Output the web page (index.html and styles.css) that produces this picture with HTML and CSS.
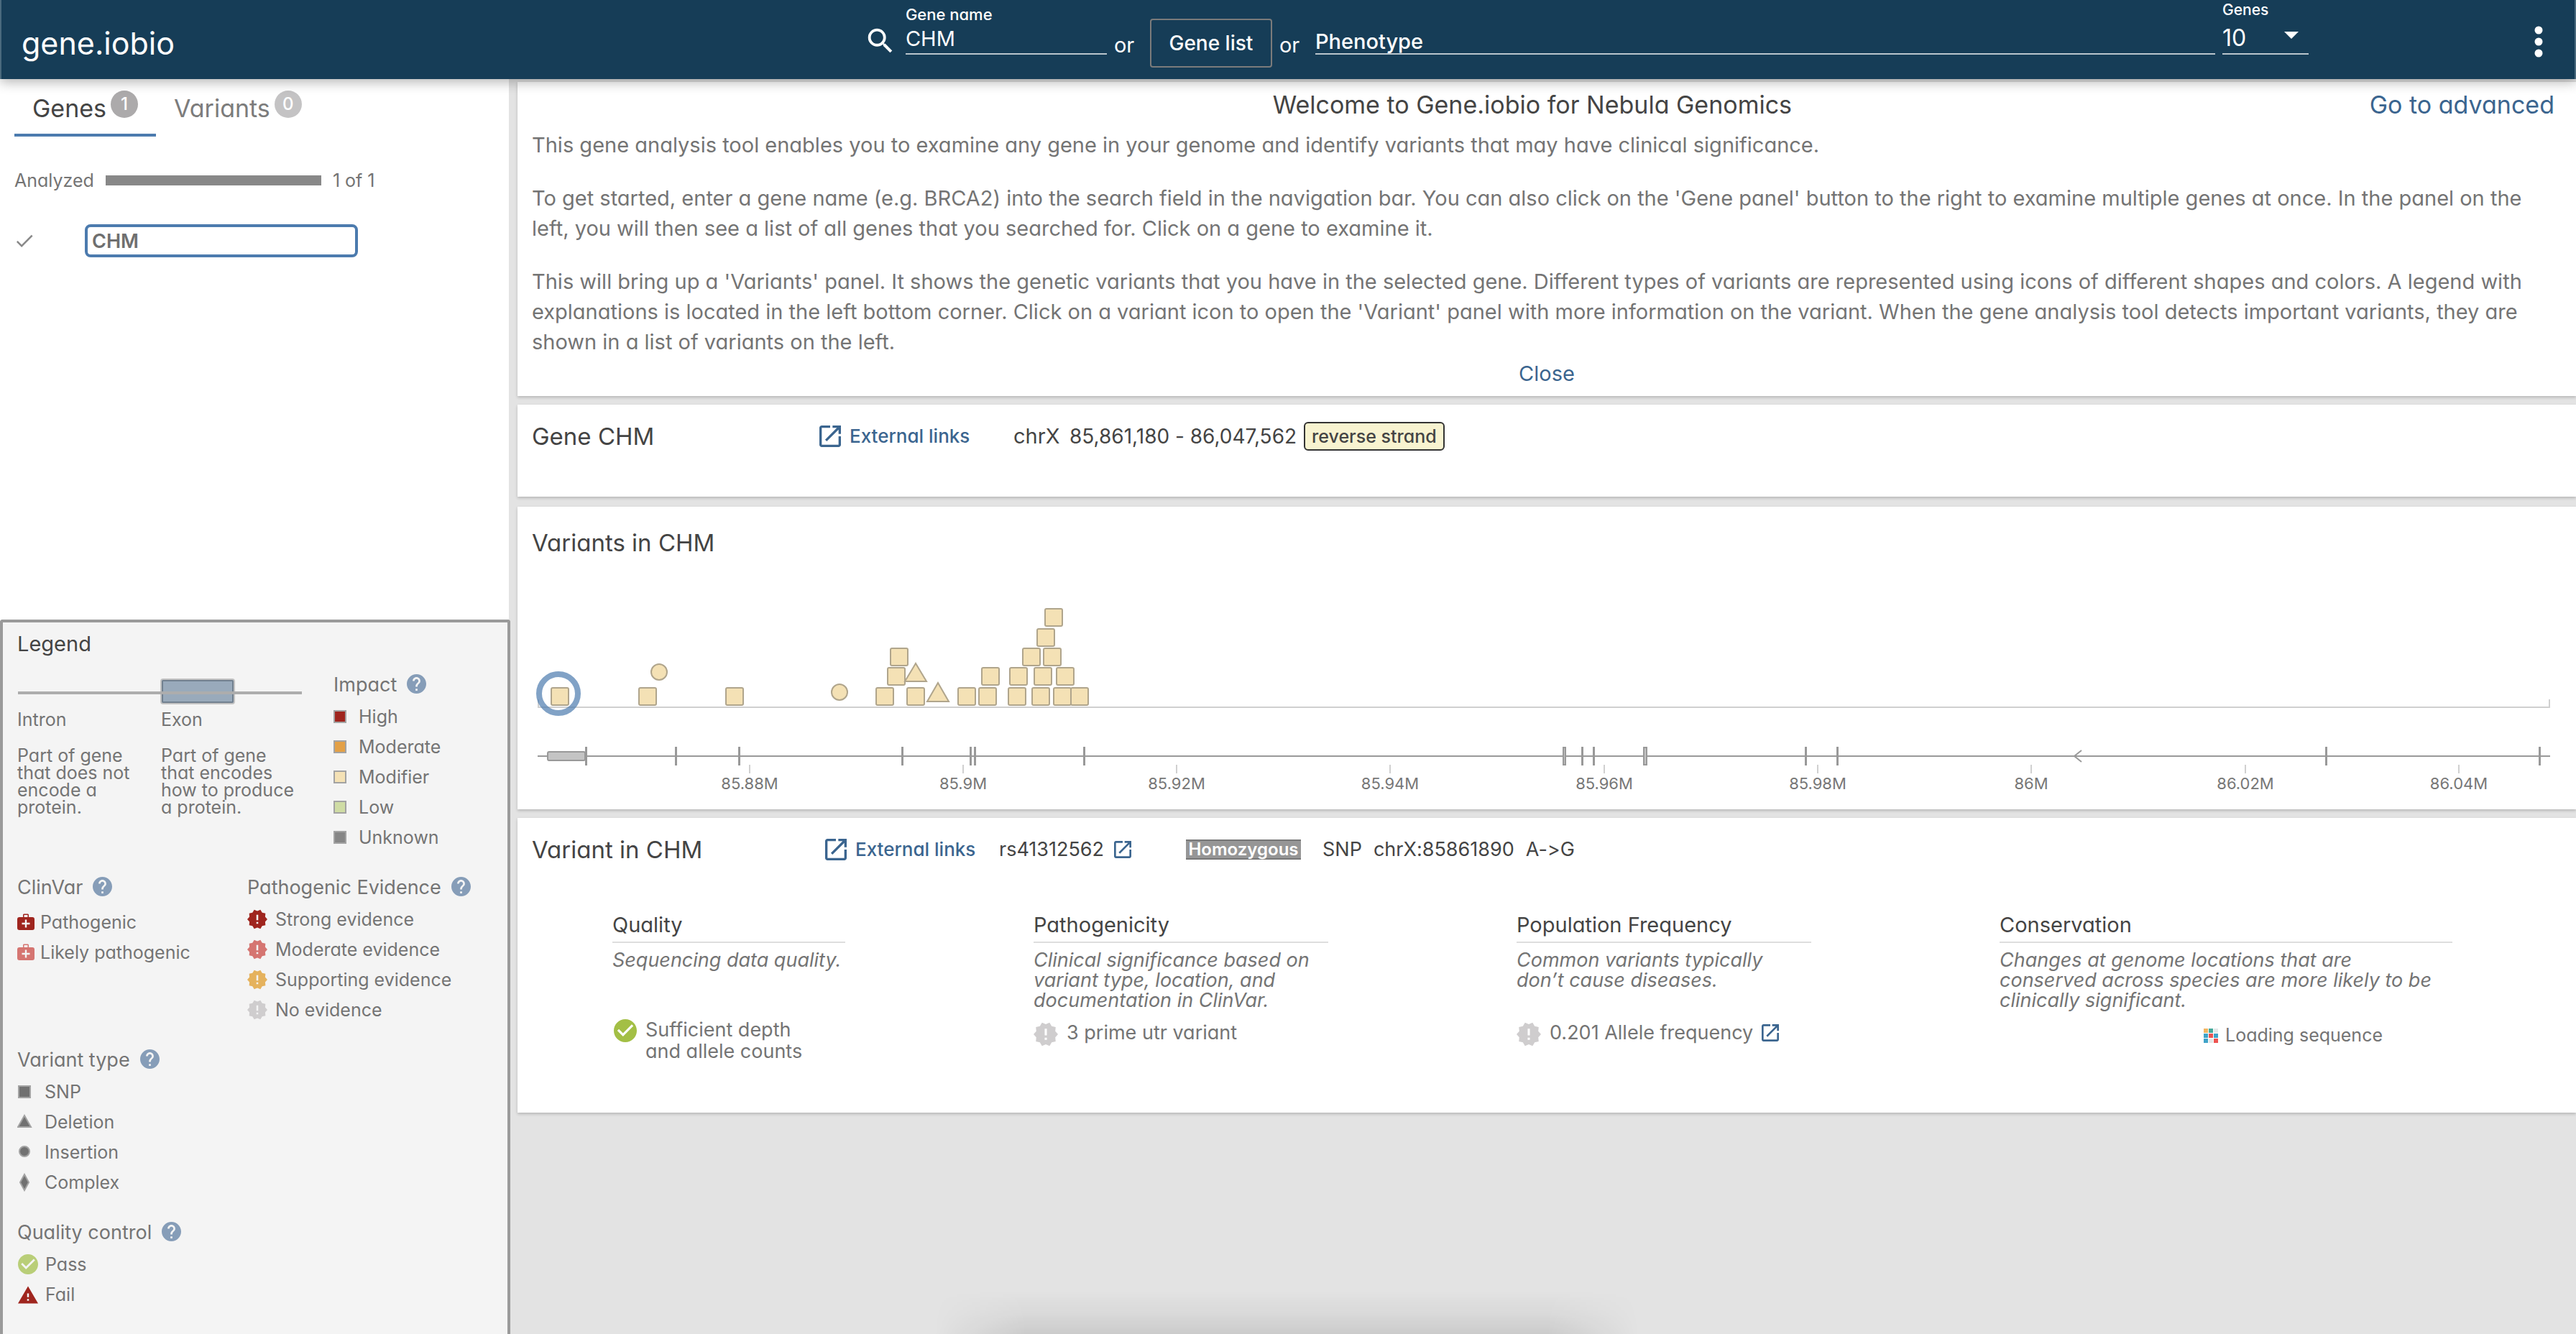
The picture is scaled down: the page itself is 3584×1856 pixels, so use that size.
FILE: index.html
```html
<!DOCTYPE html>
<html lang="en">
<head>
<meta charset="utf-8">
<title>gene.iobio</title>
<link rel="stylesheet" href="styles.css">
</head>
<body>
<svg class="sprite" aria-hidden="true">
  <symbol id="i-search" viewBox="0 0 24 24"><path d="M9.5,3A6.5,6.5 0 0,1 16,9.500C16,11.110 15.410,12.590 14.440,13.730L14.710,14H15.500L20.500,19L19,20.500L14,15.500V14.710L13.730,14.440C12.590,15.410 11.110,16 9.500,16A6.500,6.500 0 0,1 3,9.500A6.500,6.500 0 0,1 9.500,3M9.500,5C7,5 5,7 5,9.500C5,12 7,14 9.500,14C12,14 14,12 14,9.500C14,7 12,5 9.500,5Z"/></symbol>
  <symbol id="i-help" viewBox="2 2 20 20"><path d="M12 2C6.480 2 2 6.480 2 12s4.480 10 10 10 10-4.480 10-10S17.520 2 12 2zm1 17h-2v-2h2v2zm2.070-7.750l-.9.920C13.450 12.900 13 13.500 13 15h-2v-.5c0-1.100.450-2.100 1.170-2.830l1.240-1.260c.370-.360.590-.860.590-1.410 0-1.100-.9-2-2-2s-2 .9-2 2H8c0-2.210 1.790-4 4-4s4 1.790 4 4c0 .880-.360 1.680-.930 2.250z"/></symbol>
  <symbol id="i-check" viewBox="2 2 20 20"><path d="M12 2C6.480 2 2 6.480 2 12s4.480 10 10 10 10-4.480 10-10S17.520 2 12 2zm-2 15l-5-5 1.410-1.410L10 14.170l7.590-7.590L19 8l-9 9z"/></symbol>
  <symbol id="i-tick" viewBox="3 5 18 14"><path d="M9 16.200L4.800 12l-1.400 1.400L9 19 21 7l-1.400-1.400L9 16.200z"/></symbol>
  <symbol id="i-badge" viewBox="1 1 22 22"><path d="M23,12L20.560,9.220L20.900,5.540L17.290,4.720L15.400,1.540L12,3L8.600,1.540L6.710,4.720L3.100,5.530L3.440,9.210L1,12L3.440,14.780L3.100,18.470L6.710,19.290L8.600,22.470L12,21L15.400,22.460L17.290,19.280L20.900,18.460L20.560,14.780L23,12M13,17H11V15H13V17M13,13H11V7H13V13Z"/></symbol>
  <symbol id="i-bag" viewBox="0 0 24 24"><path fill-rule="evenodd" d="M8 5V1.500L9 .5h6l1 1V5h5a3 3 0 0 1 3 3v12a3 3 0 0 1-3 3H3a3 3 0 0 1-3-3V8a3 3 0 0 1 3-3zM9.500 2v3h5V2zM10.800 8.500v4.300H6.500v2.400h4.300v4.300h2.400v-4.300h4.300v-2.400h-4.300V8.500z"/></symbol>
  <symbol id="i-open" viewBox="3 3 18 18"><path d="M19 19H5V5h7V3H5c-1.110 0-2 .9-2 2v14c0 1.100.890 2 2 2h14c1.100 0 2-.9 2-2v-7h-2v7zM14 3v2h3.590l-9.830 9.830 1.410 1.410L19 6.410V10h2V3h-7z"/></symbol>
  <symbol id="i-alert" viewBox="1 2 22 19"><path d="M1 21h22L12 2 1 21zm12-3h-2v-2h2v2zm0-4h-2v-4h2v4z"/></symbol>
</svg>

<header class="topbar">
  <h1 class="brand">gene.iobio</h1>
  <svg class="search-icon"><use href="#i-search"/></svg>
  <div class="field field-gene">
    <label for="gene">Gene name</label>
    <input id="gene" type="text" value="CHM">
  </div>
  <span class="or">or</span>
  <button class="gene-list" type="button">Gene list</button>
  <span class="or">or</span>
  <div class="field field-pheno">
    <input type="text" placeholder="Phenotype" aria-label="Phenotype">
  </div>
  <div class="field field-count">
    <label for="count">Genes</label>
    <select id="count"><option>10</option></select>
    <svg class="caret" viewBox="0 0 20 10"><path d="M0 0h20L10 10z"/></svg>
  </div>
  <button class="menu" type="button" aria-label="Menu">
    <svg viewBox="0 0 12 44"><circle cx="6" cy="6" r="5.500"/><circle cx="6" cy="22" r="5.500"/><circle cx="6" cy="38" r="5.500"/></svg>
  </button>
</header>

<div class="layout">
  <aside class="sidebar">
    <nav class="tabs">
      <button class="tab active" type="button">Genes<span class="count">1</span></button>
      <button class="tab" type="button">Variants<span class="count">0</span></button>
    </nav>
    <div class="progress">
      <span>Analyzed</span><span class="bar"></span><span>1 of 1</span>
    </div>
    <div class="gene-row">
      <svg class="tick"><use href="#i-tick"/></svg>
      <button class="gene-chip" type="button">CHM</button>
    </div>

    <section class="legend">
      <h2>Legend</h2>
      <div class="legend-top">
        <div class="structure">
          <svg class="gene-glyph" viewBox="0 0 396 36">
            <rect x="200" y="1" width="102" height="34" rx="3" fill="#99aabb" stroke="#c2c2c2" stroke-width="2"/>
            <rect x="202" y="3" width="98" height="30" rx="1" fill="#99aabb" stroke="#71808f" stroke-width="2"/>
            <path d="M1 20H396" stroke="#adadad" stroke-width="4"/>
          </svg>
          <dl class="terms">
            <div><dt>Intron</dt><dd>Part of gene<br>that does not<br>encode a<br>protein.</dd></div>
            <div><dt>Exon</dt><dd>Part of gene<br>that encodes<br>how to produce<br>a protein.</dd></div>
          </dl>
        </div>
        <div class="impact">
          <h3>Impact <svg class="help"><use href="#i-help"/></svg></h3>
          <ul>
            <li><i class="swatch high"></i>High</li>
            <li><i class="swatch moderate"></i>Moderate</li>
            <li><i class="swatch modifier"></i>Modifier</li>
            <li><i class="swatch low"></i>Low</li>
            <li><i class="swatch unknown"></i>Unknown</li>
          </ul>
        </div>
      </div>
      <div class="legend-mid">
        <div class="clinvar">
          <h3>ClinVar <svg class="help"><use href="#i-help"/></svg></h3>
          <ul>
            <li><svg class="bag red"><use href="#i-bag"/></svg>Pathogenic</li>
            <li><svg class="bag pink"><use href="#i-bag"/></svg>Likely pathogenic</li>
          </ul>
        </div>
        <div class="evidence">
          <h3>Pathogenic Evidence <svg class="help"><use href="#i-help"/></svg></h3>
          <ul>
            <li><svg class="decagram red"><use href="#i-badge"/></svg>Strong evidence</li>
            <li><svg class="decagram pink"><use href="#i-badge"/></svg>Moderate evidence</li>
            <li><svg class="decagram amber"><use href="#i-badge"/></svg>Supporting evidence</li>
            <li><svg class="decagram pale"><use href="#i-badge"/></svg>No evidence</li>
          </ul>
        </div>
      </div>
      <div class="types">
        <h3>Variant type <svg class="help"><use href="#i-help"/></svg></h3>
        <ul>
          <li><svg class="shape" viewBox="0 0 22 26"><rect x="2" y="5" width="16" height="16"/></svg>SNP</li>
          <li><svg class="shape" viewBox="0 0 22 26"><path d="M10 4L19 20H1z"/></svg>Deletion</li>
          <li><svg class="shape" viewBox="0 0 22 26"><circle cx="10" cy="12" r="7"/></svg>Insertion</li>
          <li><svg class="shape" viewBox="0 0 22 26"><path d="M10 2l6 11-6 11-6-11z"/></svg>Complex</li>
        </ul>
      </div>
      <div class="quality">
        <h3>Quality control <svg class="help"><use href="#i-help"/></svg></h3>
        <ul>
          <li><svg class="pass"><use href="#i-check"/></svg>Pass</li>
          <li><svg class="fail"><use href="#i-alert"/></svg>Fail</li>
        </ul>
      </div>
    </section>
  </aside>

  <main class="content">
    <section class="card welcome">
      <div class="welcome-head">
        <h2>Welcome to Gene.iobio for Nebula Genomics</h2>
        <a href="#advanced">Go to advanced</a>
      </div>
      <p>This gene analysis tool enables you to examine any gene in your genome and identify variants that may have clinical significance.</p>
      <p>To get started, enter a gene name (e.g. BRCA2) into the search field in the navigation bar. You can also click on the 'Gene panel' button to the right to examine multiple genes at once. In the panel on the left, you will then see a list of all genes that you searched for. Click on a gene to examine it.</p>
      <p>This will bring up a 'Variants' panel. It shows the genetic variants that you have in the selected gene. Different types of variants are represented using icons of different shapes and colors. A legend with explanations is located in the left bottom corner. Click on a variant icon to open the 'Variant' panel with more information on the variant. When the gene analysis tool detects important variants, they are shown in a list of variants on the left.</p>
      <button class="close" type="button">Close</button>
    </section>

    <section class="card gene-card">
      <h2>Gene CHM</h2>
      <a class="ext" href="#links"><svg class="open"><use href="#i-open"/></svg>External links</a>
      <span class="chrom">chrX</span>
      <span class="range">85,861,180 - 86,047,562</span>
      <span class="strand">reverse strand</span>
    </section>

    <section class="card variants-card">
      <h2>Variants in CHM</h2>
      <svg class="chart" viewBox="720 776 2864 344" role="img" aria-label="Variants in CHM">
        <path class="axis" d="M749 973V984H3547V973"/>
        <g class="variants">
          <rect x="767" y="957" width="24" height="24" rx="2"/>
          <rect x="889" y="957" width="24" height="24" rx="2"/>
          <rect x="1010" y="957" width="24" height="24" rx="2"/>
          <rect x="1219" y="957" width="24" height="24" rx="2"/>
          <rect x="1262" y="957" width="24" height="24" rx="2"/>
          <rect x="1333" y="957" width="24" height="24" rx="2"/>
          <rect x="1362" y="957" width="24" height="24" rx="2"/>
          <rect x="1403" y="957" width="24" height="24" rx="2"/>
          <rect x="1436" y="957" width="24" height="24" rx="2"/>
          <rect x="1466" y="957" width="24" height="24" rx="2"/>
          <rect x="1490" y="957" width="24" height="24" rx="2"/>
          <rect x="1235" y="929" width="24" height="24" rx="2"/>
          <rect x="1366" y="929" width="24" height="24" rx="2"/>
          <rect x="1405" y="929" width="24" height="24" rx="2"/>
          <rect x="1439" y="929" width="24" height="24" rx="2"/>
          <rect x="1470" y="929" width="24" height="24" rx="2"/>
          <rect x="1239" y="902" width="24" height="24" rx="2"/>
          <rect x="1423" y="902" width="24" height="24" rx="2"/>
          <rect x="1452" y="902" width="24" height="24" rx="2"/>
          <rect x="1443" y="875" width="24" height="24" rx="2"/>
          <rect x="1454" y="847" width="24" height="24" rx="2"/>
          <circle cx="917" cy="935" r="11"/>
          <circle cx="1168" cy="963" r="11"/>
          <path d="M1274 923L1289 948H1259z"/>
          <path d="M1305 950L1320 976H1290z"/>
        </g>
        <circle class="ring" cx="777" cy="965" r="27"/>
        <g class="exons">
          <path class="strand-line" d="M748 1052H3548M2896 1044L2886 1052L2896 1060"/>
          <rect x="762" y="1046" width="52" height="12" rx="2"/>
          <rect x="815" y="1040" width="1" height="24"/>
          <rect x="940" y="1040" width="1" height="24"/>
          <rect x="1028" y="1040" width="1" height="24"/>
          <rect x="1255" y="1040" width="1" height="24"/>
          <rect x="1350" y="1040" width="1" height="24"/>
          <rect x="1356" y="1040" width="1" height="24"/>
          <rect x="1508" y="1040" width="1" height="24"/>
          <rect x="2175" y="1040" width="3" height="24"/>
          <rect x="2201" y="1040" width="1" height="24"/>
          <rect x="2217" y="1040" width="1" height="24"/>
          <rect x="2287" y="1040" width="4" height="24"/>
          <rect x="2512" y="1040" width="1" height="24"/>
          <rect x="2556" y="1040" width="1" height="24"/>
          <rect x="3236" y="1040" width="1" height="24"/>
          <rect x="3533" y="1040" width="1" height="24"/>
        </g>
        <path class="axis" d="M1043 1064v12M1340 1064v12M1637 1064v12M1934 1064v12M2232 1064v12M2529 1064v12M2826 1064v12M3124 1064v12M3421 1064v12"/>
        <g class="ticks">
          <text x="1043" y="1098">85.88M</text>
          <text x="1340" y="1098">85.9M</text>
          <text x="1637" y="1098">85.92M</text>
          <text x="1934" y="1098">85.94M</text>
          <text x="2232" y="1098">85.96M</text>
          <text x="2529" y="1098">85.98M</text>
          <text x="2826" y="1098">86M</text>
          <text x="3124" y="1098">86.02M</text>
          <text x="3421" y="1098">86.04M</text>
        </g>
      </svg>
    </section>

    <section class="card variant-card">
      <div class="variant-head">
        <h2>Variant in CHM</h2>
        <a class="ext" href="#links"><svg class="open"><use href="#i-open"/></svg>External links</a>
        <a class="rsid" href="#rs41312562">rs41312562<svg class="open-small"><use href="#i-open"/></svg></a>
        <strong class="zygosity">Homozygous</strong>
        <span class="facts"><span>SNP</span><span>chrX:85861890</span><span>A-&gt;G</span></span>
      </div>
      <div class="facets">
        <article>
          <h3>Quality</h3>
          <p>Sequencing data quality.</p>
          <div class="finding"><svg class="ok"><use href="#i-check"/></svg><span>Sufficient depth<br>and allele counts</span></div>
        </article>
        <article>
          <h3>Pathogenicity</h3>
          <p>Clinical significance based on<br>variant type, location, and<br>documentation in ClinVar.</p>
          <div class="finding"><svg class="mark"><use href="#i-badge"/></svg><span>3 prime utr variant</span></div>
        </article>
        <article>
          <h3>Population Frequency</h3>
          <p>Common variants typically<br>don’t cause diseases.</p>
          <div class="finding"><svg class="mark"><use href="#i-badge"/></svg><span>0.201 Allele frequency</span><a href="#frequency" aria-label="Open allele frequency"><svg class="open-small"><use href="#i-open"/></svg></a></div>
        </article>
        <article>
          <h3>Conservation</h3>
          <p>Changes at genome locations that are<br>conserved across species are more likely to be<br>clinically significant.</p>
          <div class="finding loading">
            <svg class="loader" viewBox="0 0 20 20">
              <path fill="#f3b663" d="M0 0h6v6H0z"/><path fill="#45a99b" d="M7 0h6v6H7z"/><path fill="#e4e8e8" d="M14 0h6v6h-6zM7 14h6v6H7z"/>
              <path fill="#3fa3c8" d="M0 7h6v6H0zM14 7h6v6h-6zM0 14h6v6H0z"/><path fill="#ee5350" d="M7 7h6v6H7zM14 14h6v6h-6z"/>
            </svg>
            <span>Loading sequence</span>
          </div>
        </article>
      </div>
    </section>
    <div class="foot-shadow"></div>
  </main>
</div>
</body>
</html>
```
FILE: styles.css
```css
* { box-sizing: border-box; }

body {
  margin: 0;
  min-height: 100vh;
  display: flex;
  flex-direction: column;
  background: #e3e3e3;
  color: #747474;
  font-family: Inter, "Open Sans", sans-serif;
  font-size: 29px;
  line-height: 42px;
  font-feature-settings: "calt" 0, "cv11" 1;
}

h1, h2, h3, p, ul, dl, dd { margin: 0; padding: 0; font-weight: 400; }
ul { list-style: none; }
button, input, select { font: inherit; font-feature-settings: inherit; color: inherit; background: none; border: 0; padding: 0; margin: 0; }
svg { display: block; flex: none; fill: currentColor; }
a { color: #3b658f; text-decoration: none; }
h2 { color: #444; font-size: 33px; }
.sprite { position: absolute; width: 0; height: 0; }

/* Top bar */
.topbar {
  position: relative;
  z-index: 2;
  display: flex;
  align-items: flex-end;
  height: 110px;
  padding: 0 30px 16px 0;
  border: solid #4a6a7d;
  border-width: 0 2px;
  background: #163d57;
  color: #fff;
  box-shadow: 0 4px 16px rgba(0, 0, 0, .3);
}
.brand { flex: 0 0 33.8%; padding: 0 0 10px 28px; font-size: 43px; line-height: 48px; }
.search-icon { width: 46px; height: 46px; margin: 0 12px 14px 0; }
.field { position: relative; display: flex; flex-direction: column; padding-bottom: 18px; }
.field label { font-size: 21px; line-height: 28px; font-weight: 500; }
.field input, .field select { width: 100%; border-bottom: 2px solid #b9c5cc; outline: 0; border-radius: 0; }
.field-gene { width: 280px; }
.field-gene label { font-size: 22px; }
.field-gene input { height: 42px; }
.field-pheno { flex: 1; margin-right: 10px; }
.field-pheno input { height: 34px; font-weight: 500; }
.field-pheno input::placeholder { color: #fff; opacity: 1; }
.field-count { width: 120px; }
.field-count select { height: 48px; padding-top: 4px; appearance: none; font-size: 32px; }
.caret { position: absolute; top: 44px; right: 14px; width: 20px; height: 10px; pointer-events: none; }
.or { width: 60px; padding: 0 0 10px 10px; }
.gene-list { width: 170px; height: 68px; border: 2px solid #7b7b7b; border-radius: 4px; font-size: 28px; font-weight: 500; }
.menu { width: 40px; height: 44px; margin: 0 0 14px 300px; display: grid; place-items: center; }
.menu svg { width: 12px; height: 44px; }

/* Page columns */
.layout { flex: 1; display: flex; gap: 10px; }
.sidebar { flex: none; width: 710px; display: flex; flex-direction: column; border-right: 2px solid #e3e3e3; background: #fff; }
.content { flex: 1; min-width: 0; display: flex; flex-direction: column; gap: 12px; padding-top: 4px; }

.tabs { display: flex; padding-left: 20px; }
.tab { display: flex; align-items: flex-start; gap: 6px; height: 80px; padding: 16px 25px 0; border-bottom: 4px solid transparent; font-size: 34px; line-height: 50px; color: #7c7c7c; }
.tab > .count { min-width: 38px; height: 38px; border-radius: 19px; background: #c4c3c4; color: #fff; font-size: 24px; line-height: 38px; font-weight: 500; }
.tab.active { color: #444; border-color: #4c7bae; }
.tab.active > .count { background: #acaaab; }

.progress { display: flex; align-items: center; gap: 16px; padding: 40px 20px 0; font-size: 25px; }
.bar { width: 300px; height: 14px; background: #888; }
.gene-row { display: flex; align-items: center; gap: 72px; padding: 40px 22px 0; }
.tick { width: 24px; height: 18px; color: #888; }
.gene-chip { width: 380px; height: 46px; padding: 2px 0 0 6px; border: 4px solid #4c7bae; border-radius: 8px; text-align: left; font-size: 27px; line-height: 36px; font-weight: 600; color: #6f6f6f; }

/* Legend */
.legend { margin: auto -2px 0 0; padding: 10px 20px 34px 20px; border: solid #9a9a9a; border-width: 4px 4px 0; border-radius: 4px 4px 0 0; background: #f4f4f4; font-size: 25px; }
.legend h2 { font-size: 29px; line-height: 40px; }
.legend h3 { display: flex; gap: 14px; font-size: 27px; margin-bottom: 2px; }
.legend li { display: flex; align-items: center; }
.help { width: 27px; height: 27px; margin-top: 6px; color: #869db8; }
.legend-top { display: flex; }
.structure { width: 440px; padding-top: 28px; }
.gene-glyph { width: 396px; height: 36px; }
.terms { display: flex; padding-top: 9px; line-height: 24px; }
.terms div { width: 200px; }
.terms dd { margin-top: 26px; }
.impact { padding-top: 16px; }
.swatch { width: 18px; height: 18px; margin-right: 17px; border: 2px solid #a3a3a3; }
.high { background: #9f251e; }
.moderate { background: #e3a046; }
.modifier { background: #f4e1b5; }
.low { background: #cfdca4; }
.unknown { background: #868686; }
.legend-mid { display: flex; margin: 28px 0; }
.clinvar { width: 320px; }
.clinvar ul { padding-top: 4px; }
.bag { width: 24px; height: 24px; margin-right: 8px; }
.decagram { width: 28px; height: 28px; margin-right: 11px; }
.red { color: #9f251e; }
.pink { color: #d57571; }
.amber { color: #e5b25d; }
.pale { color: #cfcdce; }
.shape { width: 22px; height: 26px; margin-right: 16px; fill: #717171; stroke: #a3a3a3; stroke-width: 2px; }
.quality { margin-top: 28px; }
.pass { width: 28px; height: 28px; margin: 0 10px 0 1px; color: #b9ce78; }
.fail { width: 28px; height: 25px; margin: 0 10px 0 1px; color: #9f251e; }

/* Cards */
.card { background: #fff; padding: 23px 20px 0; box-shadow: 0 2px 4px rgba(0, 0, 0, .2); }
.welcome { padding: 11px 30px 10px 20px; }
.welcome-head { display: grid; grid-template-columns: 34fr auto 35fr; margin: 0 0 14px; font-size: 34px; }
.welcome-head h2 { grid-column: 2; font-size: 34px; }
.welcome-head a { justify-self: end; }
.welcome p { margin-right: 6px; }
.welcome p + p { margin-top: 32px; }
.close { display: block; margin: 2px auto 0; padding-left: 10px; color: #3b658f; }

.gene-card { display: flex; min-height: 128px; }
.gene-card h2 { width: 400px; }
.ext { display: flex; align-items: center; gap: 12px; height: 42px; font-size: 26px; font-weight: 500; }
.open { width: 30px; height: 30px; }
.open-small { width: 24px; height: 24px; color: #3b658f; }
.gene-card .ext { width: 270px; }
.chrom { width: 78px; color: #444; }
.range { color: #444; margin-right: 10px; font-size: 28px; }
.strand { height: 40px; padding: 0 9px; border: 2px solid #333; border-radius: 6px; background: #f8f3d0; color: #444; font-size: 25px; line-height: 36px; font-weight: 500; margin-top: 1px; }

.variants-card { margin-top: 2px; padding: 29px 0 6px; }
.variants-card h2 { padding-left: 20px; }
.chart { width: 100%; height: auto; }
.axis { fill: none; stroke: #d0d0d0; stroke-width: 2px; }
.variants { fill: #f4e1b5; stroke: #b0a58c; stroke-width: 2px; }
.ring { fill: none; stroke: #4c7bae; stroke-opacity: .7; stroke-width: 8px; }
.exons { fill: #c4c4c4; stroke: #999; stroke-width: 2px; }
.strand-line { fill: none; }
.ticks { fill: #777; font-size: 22px; text-anchor: middle; }

.variant-card { padding-bottom: 70px; }
.variant-head { display: flex; color: #444; font-size: 27px; }
.variant-head h2 { width: 408px; }
.variant-head .ext { width: 242px; }
.rsid { display: flex; align-items: center; gap: 14px; width: 260px; color: #444; }
.zygosity { align-self: center; width: 160px; height: 28px; margin-right: 30px; background: #969696; color: #fff; border: solid #777; border-width: 2px 0; font-size: 24px; line-height: 24px; font-weight: 600; text-align: center; }
.facts { display: flex; gap: 16px; }

.facets { display: grid; grid-template-columns: 586fr 672fr 672fr 802fr; padding: 61px 0 0 112px; margin-right: -20px; }
.facets article { width: 410px; }
.facets article:first-child { width: 324px; }
.facets article:last-child { width: 630px; }
.facets h3 { color: #444; font-size: 29px; line-height: 46px; border-bottom: 2px solid #dedede; }
.facets p { min-height: 100px; padding-top: 10px; font-size: 27px; line-height: 28px; font-style: italic; white-space: nowrap; }
.finding { display: flex; gap: 12px; padding-top: 10px; font-size: 27px; line-height: 30px; }
.facets article:first-child .finding { padding-top: 6px; }
.ok { width: 32px; height: 32px; margin-left: 2px; color: #a3bf45; }
.mark { width: 34px; height: 34px; color: #cfcdce; }
.finding a { margin: 3px 0 0; }
.loading { padding: 13px 0 0 284px; font-size: 25px; gap: 10px; }
.loader { width: 20px; height: 20px; margin-top: 6px; }

.foot-shadow {
  width: 980px;
  height: 60px;
  margin: auto auto 0 580px;
  background: linear-gradient(to top, rgba(0, 0, 0, .1), rgba(0, 0, 0, .04) 50%, transparent);
  mask-image: linear-gradient(to right, transparent, #000 13%, #000 87%, transparent);
}
```
